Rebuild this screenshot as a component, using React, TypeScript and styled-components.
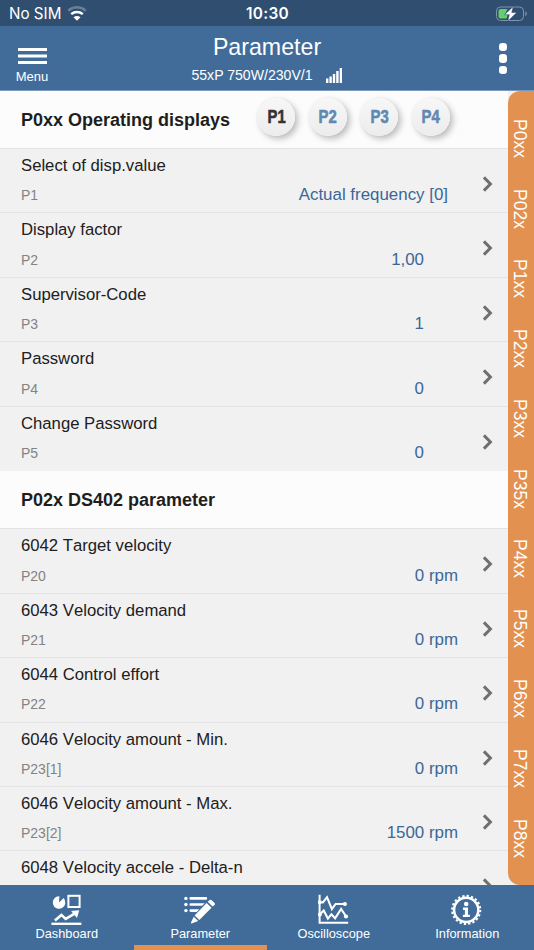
import React from "react";
import styled, { createGlobalStyle } from "styled-components";

const GlobalStyle = createGlobalStyle`
  * { box-sizing: border-box; }
  body { margin: 0; background: #f0f0f0; font-family: "Liberation Sans", Arial, sans-serif; }
`;

const Screen = styled.div`
  width: 534px;
  height: 950px;
  display: flex;
  flex-direction: column;
  overflow: hidden;
  background: #f1f1f1;
`;

const StatusBar = styled.div`
  height: 26px;
  flex: none;
  display: grid;
  grid-template-columns: 1fr auto 1fr;
  align-items: center;
  padding: 2px 8px 0 9px;
  background: #2f4e70;
  color: #fff;
  font: 400 15.2px/24px Inter, sans-serif;
`;

const Carrier = styled.div`
  display: flex;
  align-items: center;
  gap: 6px;
`;

const Clock = styled.div`
  font-weight: 600;
  font-size: 15.4px;
  letter-spacing: 0.25px;
`;

const BatterySlot = styled.div`
  display: flex;
  justify-content: flex-end;
  margin-right: -2px;
`;

const Header = styled.header`
  height: 65px;
  flex: none;
  display: grid;
  grid-template-columns: 64px 1fr 64px;
  background: #416c99;
  border-bottom: 1px solid #7c9abb;
  color: #fff;
`;

const MenuButton = styled.div`
  display: flex;
  flex-direction: column;
  align-items: center;
  padding-top: 22px;
  font-size: 13px;
  line-height: 16px;
  svg { display: block; margin-bottom: 5px; }
`;

const Heading = styled.div`
  display: flex;
  flex-direction: column;
  align-items: center;
  padding-top: 7px;
`;

const Title = styled.h1`
  margin: 0;
  font-size: 23.2px;
  font-weight: 400;
  line-height: 28px;
`;

const Device = styled.div`
  display: flex;
  align-items: center;
  gap: 13px;
  margin-top: 6px;
  font-size: 14.1px;
  line-height: 17px;
`;

const MoreButton = styled.div`
  display: flex;
  flex-direction: column;
  align-items: center;
  gap: 3px;
  padding: 17px 0 0 2px;
`;

const Dot = styled.i`
  width: 8.4px;
  height: 8.4px;
  border-radius: 3.2px;
  background: #fff;
`;

const Body = styled.div`
  flex: 1;
  min-height: 0;
  display: flex;
`;

const List = styled.main`
  flex: 1;
  min-width: 0;
  overflow: hidden;
`;

const SectionHeader = styled.div`
  height: 58px;
  display: flex;
  align-items: center;
  justify-content: space-between;
  padding: 0 58px 0 21px;
  background: #fcfcfc;
  border-bottom: 1px solid #e2e2e2;
`;

const SectionTitle = styled.h2`
  margin: 1px 0 0;
  font-size: 18px;
  line-height: 22px;
  color: #1e1e1e;
  white-space: nowrap;
`;

const Sets = styled.div`
  display: flex;
  gap: 13.6px;
  margin-top: -6px;
`;

const SetButton = styled.div<{ $active?: boolean }>`
  width: 38px;
  height: 38px;
  border-radius: 50%;
  display: flex;
  align-items: center;
  justify-content: center;
  background: linear-gradient(#f7f7f7, #ececec);
  box-shadow: 3px 3px 6px rgba(0, 0, 0, 0.25), 0 0 2px rgba(0, 0, 0, 0.08);
  color: ${(p) => (p.$active ? "#333" : "#6088b1")};
  span {
    font-size: 19px;
    font-weight: 700;
    line-height: 22px;
    transform: scaleX(0.78);
    -webkit-text-stroke: 0.6px currentColor;
  }
`;

const Row = styled.div`
  height: 64.45px;
  display: grid;
  grid-template-columns: 1fr 14px;
  padding: 0 14px 0 21px;
  border-bottom: 1px solid #e4e4e4;
  &[data-last="true"] { border-bottom-color: transparent; }
`;

const RowContent = styled.div`
  padding-top: 7px;
`;

const Name = styled.div`
  font-size: 16.7px;
  line-height: 20px;
  font-kerning: none;
  color: #202020;
`;

const Detail = styled.div<{ $inset: number }>`
  display: flex;
  justify-content: space-between;
  align-items: baseline;
  padding-right: ${(p) => p.$inset}px;
  margin-top: 8.4px;
  line-height: 22px;
`;

const Code = styled.span`
  font-size: 14px;
  color: #838383;
`;

const Value = styled.span`
  font-size: 16.9px;
  color: #3b6797;
`;

const Chevron = styled.svg`
  display: block;
  margin: 27px 0 0 2px;
  width: 12px;
  height: 16px;
  fill: none;
  stroke: #707070;
  stroke-width: 3;
`;

const GroupTabs = styled.nav`
  width: 26px;
  flex: none;
  background: #e29150;
  border-radius: 12px 0 0 12px;
  display: flex;
  flex-direction: column;
  padding-top: 28px;
  color: #fff;
`;

const GroupTab = styled.div`
  height: 70px;
  flex: none;
  writing-mode: vertical-rl;
  font-size: 17.5px;
  line-height: 24px;
  width: 24px;
`;

const TabBar = styled.nav`
  height: 65px;
  flex: none;
  display: grid;
  grid-template-columns: repeat(4, 1fr);
  background: #416c99;
`;

const Tab = styled.div<{ $active?: boolean }>`
  display: flex;
  flex-direction: column;
  align-items: center;
  padding-top: 9px;
  border-bottom: 5px solid ${(p) => (p.$active ? "#e29150" : "transparent")};
  color: #fff;
  font-size: 12.8px;
  line-height: 15px;
  svg { display: block; }
`;

const WifiIcon = () => (
  <svg width="20" height="16" viewBox="0 0 20 16" fill="none" stroke="#fff" strokeWidth="2.5">
    <path d="M1.3 4.7a13 13 0 0 1 17.4 0" opacity=".28" />
    <path d="M4.2 8.1a8.8 8.8 0 0 1 11.6 0" />
    <path d="M6.5 11.2Q10 8.7 13.5 11.2L10 14.7z" fill="#fff" stroke="none" />
  </svg>
);

const BatteryIcon = () => (
  <svg width="33" height="16" viewBox="0 0 33 16">
    <rect x="1.5" y="1" width="27" height="13.5" rx="4" fill="none" stroke="#7f95ab" />
    <path d="M30.3 5.5c2 .5 2 4 0 4.5z" fill="#7f95ab" />
    <path d="M5.5 3h7l-3 6h3l-1 3.5h-6a2 2 0 0 1-2-2V5a2 2 0 0 1 2-2z" fill="#65cf68" />
    <path d="M18.3.5 9.5 8.7h4.8L12.9 15l8.8-8.5h-5z" fill="#fff" stroke="#2f4e70" strokeWidth=".5" />
  </svg>
);

const SignalIcon = () => (
  <svg width="17" height="15" viewBox="0 0 17 15" fill="#fff">
    <path d="M0 10.5h2.4V15H0zM3.4 8.5h2.4V15H3.4zM6.8 6h2.4v9H6.8zM10.2 3h2.4v12h-2.4zM13.7 0h2.3v15h-2.3z" />
  </svg>
);

const DashboardIcon = () => (
  <svg width="32" height="32" viewBox="0.6 -0.6 32 32" fill="none" stroke="#fff">
    <path d="M8.6 7.8 13.2 3.5A6.3 6.3 0 1 1 9 1.6z" fill="#fff" stroke="none" />
    <rect x="18" y="1.2" width="11.2" height="11.2" strokeWidth="2" />
    <path d="M4.5 26 11 20.3l4.3 4L25 18.6" strokeWidth="2.6" />
    <path d="m20.7 16.3 8.1-.6-2.2 7.6z" fill="#fff" stroke="none" />
    <path d="M1 29.2h30" strokeWidth="2.3" />
  </svg>
);

const ParameterIcon = () => (
  <svg width="32" height="32" viewBox="0.3 -0.6 32 32" fill="#fff">
    <circle cx="2.2" cy="3.8" r="1.7" />
    <circle cx="2.2" cy="9.9" r="1.7" />
    <circle cx="2.2" cy="16" r="1.7" />
    <path d="M7 2.5h15.2a1.3 1.3 0 0 1 0 2.6H7a1.3 1.3 0 0 1 0-2.6zM7 8.6h14l-2.6 2.6H7a1.3 1.3 0 0 1 0-2.6zM7 14.7h8.5l-2.5 2.6H7a1.3 1.3 0 0 1 0-2.6z" />
    <path d="M22.9 8.4 27.8 13.1 15.6 25.5 10.9 20.8zM24 7.2l2-1.8q.9-.7 1.8 0L30.9 8.5q.8.9 0 1.8L28.8 12zM10 22.1l4.5 4.3-6.5 2.5q-1 0-.7-.9z" />
  </svg>
);

const OscilloscopeIcon = () => (
  <svg width="32" height="32" viewBox="0.8 -0.2 32 32" fill="none" stroke="#fff" strokeWidth="2">
    <path d="M2.4 .6v27.9H31" />
    <path d="m2 8 3.7.2 4.1-5.2 4.9 11.9 3.7-5.1h8.2M2 20.7l4.5-4.4 4.2 8.1 3.5-4.3 3.7 4 6-9.4 5 7.6" strokeWidth="2.1" />
    <g fill="#fff" stroke="none">
      <circle cx="2.5" cy="8" r="2" />
      <circle cx="27.7" cy="9.8" r="2.1" />
      <circle cx="2.7" cy="20.3" r="2" />
      <circle cx="28.8" cy="22.3" r="2.1" />
    </g>
  </svg>
);

const InformationIcon = () => (
  <svg width="32" height="32" viewBox="0.8 -0.4 32 32" fill="none" stroke="#fff">
    <circle cx="16" cy="15.5" r="12.1" strokeWidth="2.5" />
    <circle cx="16" cy="15.5" r="14.1" strokeWidth="2" strokeDasharray="2.3 2.129" />
    <circle cx="16" cy="9.6" r="2.3" fill="#fff" stroke="none" />
    <path d="M12.8 13.1h5v7.2h1.9v2.3h-7v-2.3h2v-4.8h-1.9z" fill="#fff" stroke="none" />
  </svg>
);

type Parameter = { name: string; code?: string; value?: string; inset?: number };

const displays: Parameter[] = [
  { name: "Select of disp.value", code: "P1", value: "Actual frequency [0]", inset: 32 },
  { name: "Display factor", code: "P2", value: "1,00", inset: 56 },
  { name: "Supervisor-Code", code: "P3", value: "1", inset: 56 },
  { name: "Password", code: "P4", value: "0", inset: 56 },
  { name: "Change Password", code: "P5", value: "0", inset: 56 },
];

const drive: Parameter[] = [
  { name: "6042 Target velocity", code: "P20", value: "0 rpm" },
  { name: "6043 Velocity demand", code: "P21", value: "0 rpm" },
  { name: "6044 Control effort", code: "P22", value: "0 rpm" },
  { name: "6046 Velocity amount - Min.", code: "P23[1]", value: "0 rpm" },
  { name: "6046 Velocity amount - Max.", code: "P23[2]", value: "1500 rpm" },
  { name: "6048 Velocity accele - Delta-n" },
];

const groups = ["P0xx", "P02x", "P1xx", "P2xx", "P3xx", "P35x", "P4xx", "P5xx", "P6xx", "P7xx", "P8xx"];

const ParameterRows = ({ items }: { items: Parameter[] }) => (
  <>
    {items.map((item, i) => (
      <Row key={item.name} data-last={i === items.length - 1}>
        <RowContent>
          <Name>{item.name}</Name>
          {item.code && (
            <Detail $inset={item.inset ?? 22}>
              <Code>{item.code}</Code>
              <Value>{item.value}</Value>
            </Detail>
          )}
        </RowContent>
        <Chevron viewBox="0 0 12 16">
          <path d="m1.9 1.4 6.5 6.6-6.5 6.6" />
        </Chevron>
      </Row>
    ))}
  </>
);

export default function App() {
  return (
    <Screen>
      <GlobalStyle />
      <StatusBar>
        <Carrier>
          No SIM
          <WifiIcon />
        </Carrier>
        <Clock>10:30</Clock>
        <BatterySlot>
          <BatteryIcon />
        </BatterySlot>
      </StatusBar>
      <Header>
        <MenuButton>
          <svg width="29" height="16" viewBox="0 0 29 16" fill="#fff">
            <path d="M0 0h29v3H0zM0 6.5h29v3H0zM0 13h29v3H0z" />
          </svg>
          Menu
        </MenuButton>
        <Heading>
          <Title>Parameter</Title>
          <Device>
            55xP 750W/230V/1
            <SignalIcon />
          </Device>
        </Heading>
        <MoreButton>
          <Dot />
          <Dot />
          <Dot />
        </MoreButton>
      </Header>
      <Body>
        <List>
          <SectionHeader>
            <SectionTitle>P0xx Operating displays</SectionTitle>
            <Sets>
              {["P1", "P2", "P3", "P4"].map((set, i) => (
                <SetButton key={set} $active={i === 0}>
                  <span>{set}</span>
                </SetButton>
              ))}
            </Sets>
          </SectionHeader>
          <ParameterRows items={displays} />
          <SectionHeader>
            <SectionTitle>P02x DS402 parameter</SectionTitle>
          </SectionHeader>
          <ParameterRows items={drive} />
        </List>
        <GroupTabs>
          {groups.map((group) => (
            <GroupTab key={group}>{group}</GroupTab>
          ))}
        </GroupTabs>
      </Body>
      <TabBar>
        <Tab>
          <DashboardIcon />
          Dashboard
        </Tab>
        <Tab $active>
          <ParameterIcon />
          Parameter
        </Tab>
        <Tab>
          <OscilloscopeIcon />
          Oscilloscope
        </Tab>
        <Tab>
          <InformationIcon />
          Information
        </Tab>
      </TabBar>
    </Screen>
  );
}
